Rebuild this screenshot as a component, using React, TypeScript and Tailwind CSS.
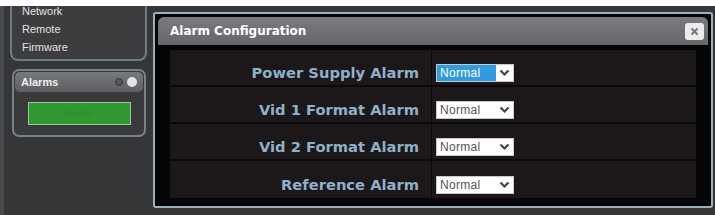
import React from "react";

const ALARMS = [
  { label: "Power Supply Alarm", active: true },
  { label: "Vid 1 Format Alarm", active: false },
  { label: "Vid 2 Format Alarm", active: false },
  { label: "Reference Alarm", active: false },
];

const Chevron: React.FC<{ className?: string }> = ({ className }) => (
  <svg width="11" height="8" viewBox="0 0 11 8" className={className}>
    <path d="M1.5 1.5 L5.5 5.5 L9.5 1.5" fill="none" stroke="currentColor" strokeWidth="2.2" />
  </svg>
);

// Fake select box, first one shown with the highlighted option
const AlarmSelect: React.FC<{ active: boolean }> = ({ active }) => (
  <div className="flex h-[18px] w-[78px] items-center bg-white border border-[#c9c9c9]">
    <div
      className={`flex h-full flex-1 items-center pl-[3px] text-[12px] tracking-[0.3px] ${
        active ? "bg-[#2f9be0] text-white" : "text-[#555]"
      }`}
    >
      Normal
    </div>
    <div className="flex h-full w-[17px] items-center justify-center text-[#444]">
      <Chevron />
    </div>
  </div>
);

const AlarmRow: React.FC<{ label: string; active: boolean; last: boolean }> = ({
  label,
  active,
  last,
}) => (
  <div
    className={`flex h-[37px] items-stretch ${last ? "" : "border-b-2 border-[#0a0809]"}`}
  >
    <div className="flex w-[262px] items-center justify-end pr-[12px] pt-[11px] border-r border-[#0a0809]">
      <span
        className="text-[14.7px] font-bold text-[#8cb2ca]"
        style={{ fontFamily: '"DejaVu Sans", Verdana, sans-serif' }}
      >
        {label}
      </span>
    </div>
    <div className="flex items-center pl-[4px] pt-[11px]">
      <AlarmSelect active={active} />
    </div>
  </div>
);

export default function App() {
  return (
    <div
      className="flex h-[215px] w-[715px] flex-col overflow-hidden bg-white"
      style={{ fontFamily: '"Liberation Sans", Arial, sans-serif' }}
    >
      <div className="h-[6px] shrink-0 bg-white" />
      <div className="flex flex-1 overflow-hidden bg-[#363639] border-l-[4px] border-[#4a4b4e]">
        {/* Left nav column */}
        <div className="flex w-[149px] shrink-0 flex-col">
          <div className="-mt-[4px] ml-[6px] w-[137px] rounded-b-[8px] border-2 border-t-0 border-[#6d7d86] bg-[#3d3d40] pb-[3px] pl-[10px] text-[11px] leading-[18px] text-[#e2e2e2]">
            <div>Network</div>
            <div>Remote</div>
            <div>Firmware</div>
          </div>

          <div className="ml-[8px] mt-[8px] w-[134px] rounded-[7px] border-2 border-[#72838c] bg-[#3a3a3d] p-[1px]">
            <div className="flex h-[20px] items-center justify-between rounded-[5px] bg-gradient-to-b from-[#78787d] to-[#5f5f63] px-[6px]">
              <span className="text-[11px] font-bold text-[#eeeeee]">Alarms</span>
              <div className="flex items-center gap-[4px]">
                <span className="h-[8px] w-[8px] rounded-full border border-[#333] bg-[#59595c]" />
                <span className="h-[10px] w-[10px] rounded-full bg-[#e4e4e6]" />
              </div>
            </div>
            <div className="flex justify-center pb-[9px] pt-[10px]">
              <div className="flex h-[23px] w-[103px] items-center justify-center border border-[#9fc59c] bg-[#2f992f] text-[10px] font-bold text-[#2b902d]">
                Reset
              </div>
            </div>
          </div>
        </div>

        {/* Dialog */}
        <div className="mt-[6px] flex h-[196px] w-[560px] shrink-0 flex-col rounded-[3px] border-2 border-[#9ab0bd] bg-[#050505] p-[3px]">
          <div className="flex h-[28px] shrink-0 items-center justify-between rounded-t-[6px] bg-gradient-to-b from-[#7a797e] to-[#67666b] pl-[12px] pr-[4px]">
            <span
              className="text-[12px] font-bold text-white"
              style={{ fontFamily: '"DejaVu Sans", Verdana, sans-serif' }}
            >
              Alarm Configuration
            </span>
            <div className="flex h-[17px] w-[19px] items-center justify-center rounded-[3px] bg-[#ececee] text-[#77777a]">
              <svg width="9" height="9" viewBox="0 0 9 9">
                <path d="M1.5 1.5 L7.5 7.5 M7.5 1.5 L1.5 7.5" stroke="currentColor" strokeWidth="2" />
              </svg>
            </div>
          </div>
          <div className="flex-1 px-[12px] pb-[4px] pt-[5px]">
            <div className="bg-[#1c1719]">
              {ALARMS.map((a, i) => (
                <AlarmRow
                  key={a.label}
                  label={a.label}
                  active={a.active}
                  last={i === ALARMS.length - 1}
                />
              ))}
            </div>
          </div>
        </div>
      </div>
    </div>
  );
}
